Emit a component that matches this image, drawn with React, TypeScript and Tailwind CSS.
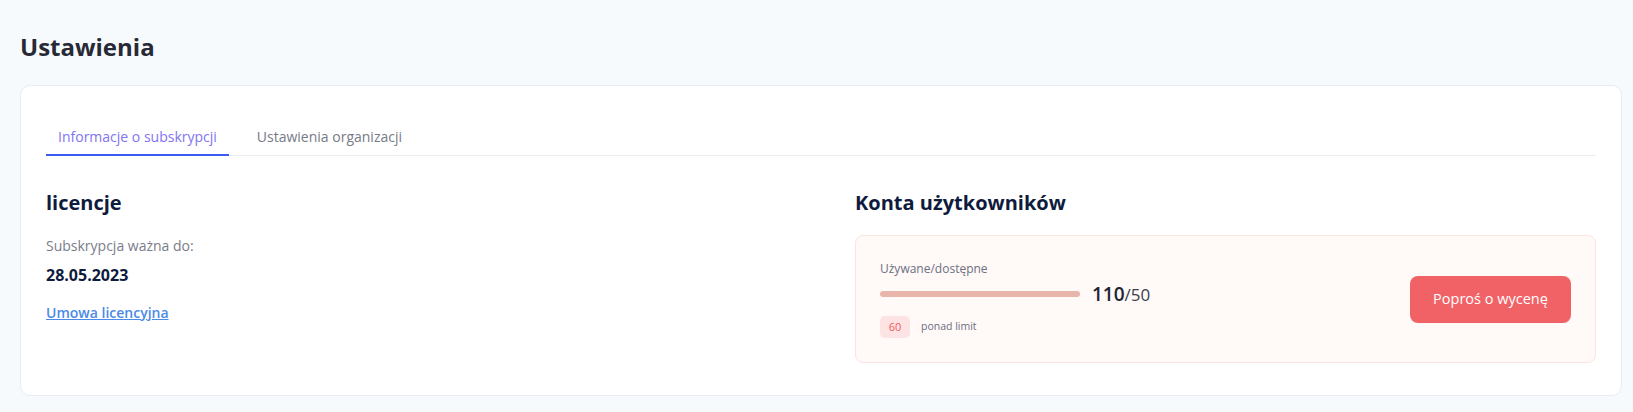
export default function App() {
  return (
    <div className="min-h-screen bg-[#f7fafd] pl-5 pr-[11px] pt-[31px] pb-4 font-['Open_Sans',sans-serif]">
      <h1 className="text-[24px] leading-8 font-bold text-[#272a36]">Ustawienia</h1>

      <div className="mt-[22px] bg-white border border-[#e7ecf3] rounded-[10px] px-[25px] pt-[41px] pb-[32px]">
        {/* Tabs */}
        <div className="flex gap-4 border-b border-[#e9ecf1]">
          <button className="-mb-px px-3 pb-[7px] border-b-2 border-[#3d5af1] text-[14px] leading-5 text-[#8174f2]">
            Informacje o subskrypcji
          </button>
          <button className="-mb-px px-3 pb-[7px] border-b-2 border-transparent text-[14px] leading-5 text-[#777a88]">
            Ustawienia organizacji
          </button>
        </div>

        <div className="grid grid-cols-2 gap-[68px] mt-[33px]">
          {/* Licence */}
          <div>
            <h2 className="text-[20px] leading-7 font-bold text-[#0f1b3d]">licencje</h2>
            <p className="mt-[19px] text-[14px] leading-5 text-[#7a7d89]">Subskrypcja ważna do:</p>
            <p className="mt-[7px] text-[16px] leading-6 font-bold text-[#0f1b3d]">28.05.2023</p>
            <a href="#" className="block mt-4 text-[14px] leading-5 font-semibold text-[#4a8ae8] underline">
              Umowa licencyjna
            </a>
          </div>

          {/* User accounts */}
          <div>
            <h2 className="text-[20px] leading-7 font-bold text-[#0f1b3d]">Konta użytkowników</h2>
            <div className="mt-[18px] h-[128px] flex items-center justify-between rounded-lg border border-[#fbe4e1] bg-[#fff9f8] px-6">
              <div>
                <p className="text-[12px] leading-[18px] text-[#6b6f80]">Używane/dostępne</p>
                <div className="mt-[2px] flex items-center gap-3 h-7">
                  <div className="w-[200px] h-[6px] rounded-full bg-[#e8b5ab]" />
                  <p className="text-[#1f2433]">
                    <span className="text-[19px] font-semibold">110</span>
                    <span className="text-[17px] text-[#3a3f4d]">/50</span>
                  </p>
                </div>
                <div className="mt-2 flex items-center gap-[11px]">
                  <span className="w-[30px] h-[22px] flex items-center justify-center rounded-[5px] bg-[#fde3e3] text-[11px] text-[#ef5a5a]">
                    60
                  </span>
                  <span className="text-[10.5px] text-[#6b6f80]">ponad limit</span>
                </div>
              </div>
              <button className="w-[161px] h-[47px] rounded-lg bg-[#f16266] text-white text-[14.5px]">
                Poproś o wycenę
              </button>
            </div>
          </div>
        </div>
      </div>
    </div>
  );
}
